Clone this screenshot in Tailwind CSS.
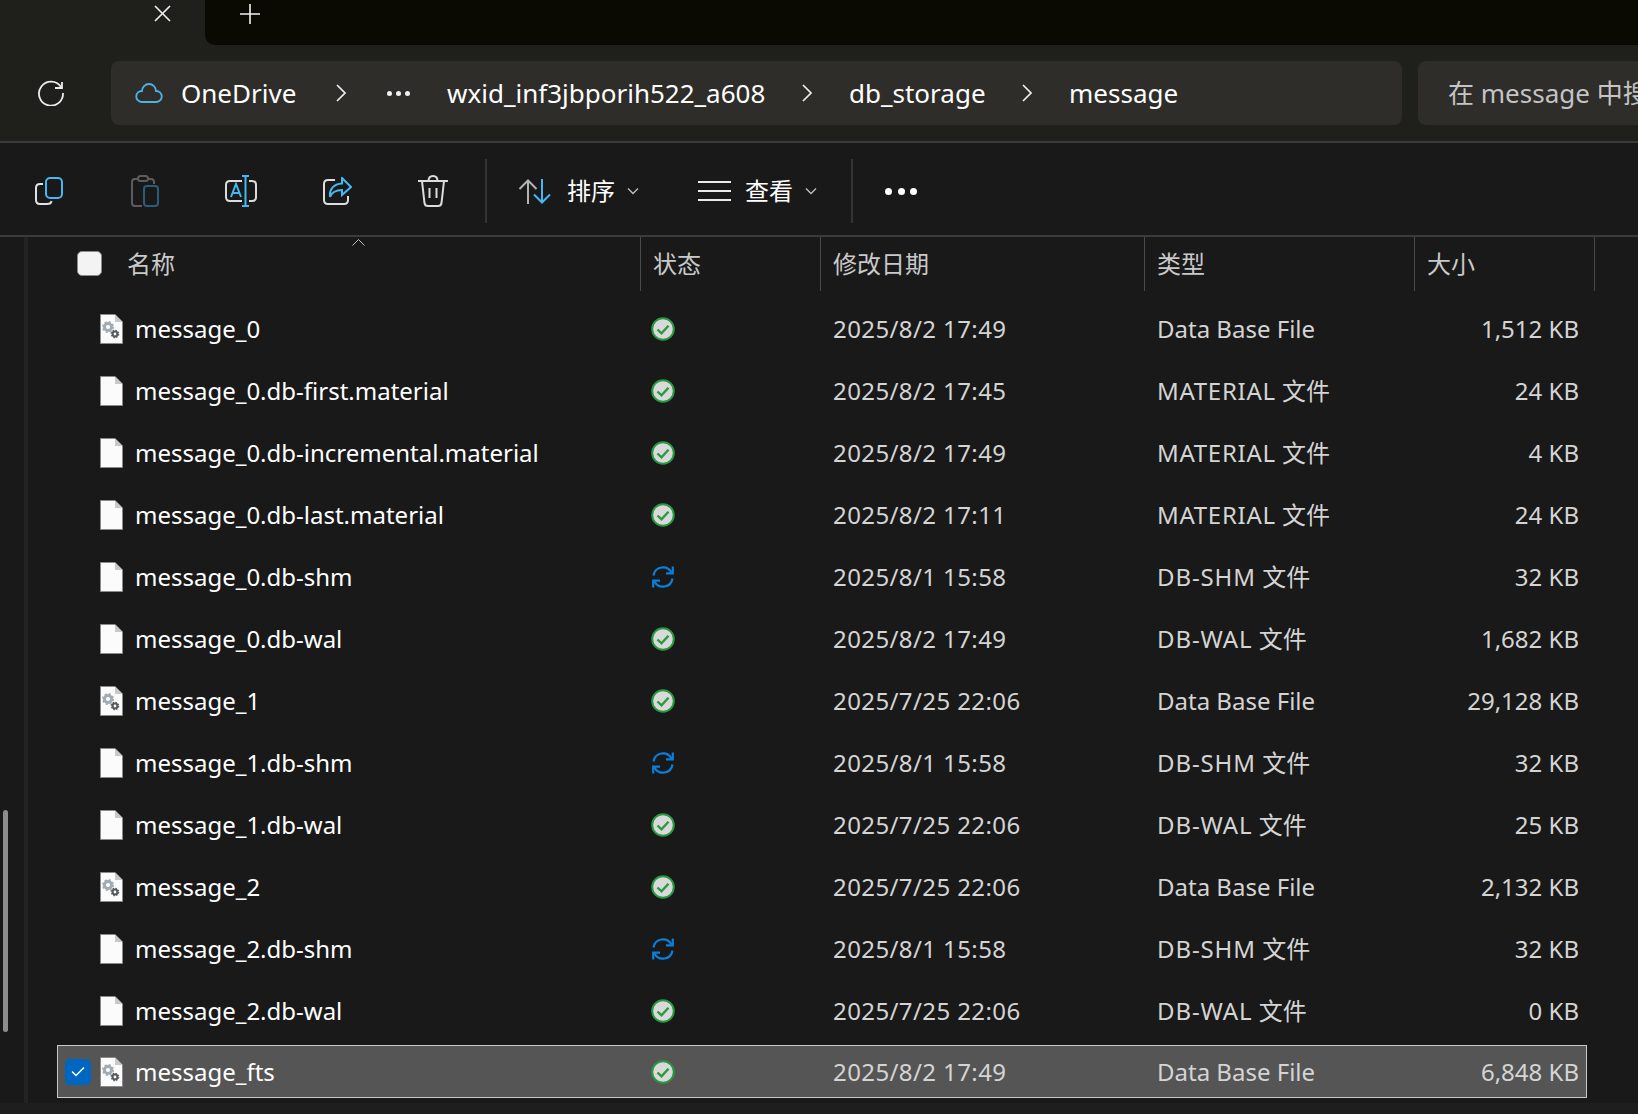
<!DOCTYPE html>
<html lang="zh-CN">
<head>
  <meta charset="UTF-8" />
  <title>message</title>
  <script src="https://cdn.jsdelivr.net/npm/@tailwindcss/browser@4"></script>
</head>
<body class="bg-[#191919] w-[1638px] h-[1114px] overflow-hidden font-['Noto_Sans','Noto_Sans_CJK_SC',sans-serif] text-[24px] text-white">

  <svg class="hidden">
    <symbol id="doc" viewBox="0 0 23 30">
      <path d="M.5.5H15L22.5 8V29.5H.5Z" fill="#fbfbfb" stroke="#8a8a8a"/>
      <path d="M15 .5V8H22.5Z" fill="#c8c8c8"/>
    </symbol>
    <symbol id="dbdoc" viewBox="0 0 23 30">
      <path d="M.5.5H15L22.5 8V29.5H.5Z" fill="#fbfbfb" stroke="#8a8a8a"/>
      <path d="M15 .5V8H22.5Z" fill="#c8c8c8"/>
      <circle cx="8" cy="13" r="3.6" fill="none" stroke="#a3abb2" stroke-width="3"/>
      <circle cx="8" cy="13" r="5.2" fill="none" stroke="#a3abb2" stroke-width="1.6" stroke-dasharray="2 2.1"/>
      <circle cx="15" cy="20" r="2.4" fill="none" stroke="#55595d" stroke-width="2"/>
      <circle cx="15" cy="20" r="3.7" fill="none" stroke="#55595d" stroke-width="1.2" stroke-dasharray="1.5 1.4"/>
    </symbol>
    <symbol id="ok" viewBox="0 0 24 24">
      <circle cx="12" cy="12" r="10.8" fill="#d9d9d9" stroke="#279a3f" stroke-width="2"/>
      <path d="M6.5 12.5l4 3.8 7-7.6" fill="none" stroke="#279a3f" stroke-width="2.4"/>
    </symbol>
    <symbol id="sync" viewBox="0 0 24 24">
      <g fill="none" stroke="#0a7fdc" stroke-width="2.2">
        <path d="M2.5 10.5A9.6 9.6 0 0 1 20.5 7.5"/>
        <path d="M21.8 1.5V8.4H15"/>
        <path d="M21.5 13.5A9.6 9.6 0 0 1 3.5 16.5"/>
        <path d="M2.2 22.5V15.6H9"/>
      </g>
    </symbol>
    <symbol id="chev" viewBox="0 0 12 20">
      <path d="M2 2l8 8-8 8" fill="none" stroke="#f0f0f0" stroke-width="1.7"/>
    </symbol>
    <symbol id="down" viewBox="0 0 12 8">
      <path d="M1 1.5l5 5 5-5" fill="none" stroke="#bdbdbd" stroke-width="1.4"/>
    </symbol>
  </svg>

  <!-- tab strip -->
  <div class="h-[45px] bg-[#1f1f1b] flex">
    <div class="w-[205px] flex justify-end items-center pr-[34px] pb-[19px]">
      <svg width="17" height="17" viewBox="0 0 17 17"><path d="M1 1l15 15M16 1L1 16" stroke="#f2f2f2" stroke-width="1.6"/></svg>
    </div>
    <div class="flex-1 bg-[#0b0a02] rounded-bl-[10px] flex items-center pl-[35px] pb-[17px]">
      <svg width="20" height="20" viewBox="0 0 20 20"><path d="M10 0v20M0 10h20" stroke="#f2f2f2" stroke-width="1.6"/></svg>
    </div>
  </div>

  <!-- address bar -->
  <div class="h-[98px] bg-[#1f1f1b] border-b-2 border-[#3b3b3b] flex items-center pl-[38px]">
    <svg class="w-[26px] h-[26px]" viewBox="0 0 26 26" fill="none" stroke="#ededed" stroke-width="1.8">
      <path d="M24 2V8H17"/>
      <path d="M23 7A12 12 0 1 0 25 13"/>
    </svg>
    <div class="ml-[47px] w-[1291px] h-[64px] bg-[#2e2d29] rounded-[8px] flex items-center text-[26px]">
      <svg class="ml-[24px] w-[28px] h-[20px]" viewBox="0 0 28 20"><path d="M6.500 19A5.500 5.500 0 0 1 7 8 7 7 0 0 1 21 8 5.500 5.500 0 0 1 21.500 19Z" fill="none" stroke="#4cb3e8" stroke-width="1.8"/></svg>
      <span class="ml-[18px] w-[115px] leading-none whitespace-nowrap">OneDrive</span>
      <svg class="ml-[39px] w-[12px] h-[20px]"><use href="#chev"/></svg>
      <span class="ml-[40px] w-[24px] flex gap-[4px]"><i class="w-[5px] h-[5px] rounded-full bg-[#f0f0f0]"></i><i class="w-[5px] h-[5px] rounded-full bg-[#f0f0f0]"></i><i class="w-[5px] h-[5px] rounded-full bg-[#f0f0f0]"></i></span>
      <span class="ml-[36px] w-[319px] leading-none whitespace-nowrap">wxid_inf3jbporih522_a608</span>
      <svg class="ml-[35px] w-[12px] h-[20px]"><use href="#chev"/></svg>
      <span class="ml-[36px] w-[135px] leading-none whitespace-nowrap">db_storage</span>
      <svg class="ml-[37px] w-[12px] h-[20px]"><use href="#chev"/></svg>
      <span class="ml-[36px] leading-none whitespace-nowrap">message</span>
    </div>
    <div class="ml-[16px] flex-1 h-[64px] bg-[#2e2d29] rounded-l-[8px] flex items-center pl-[30px] overflow-hidden">
      <span class="text-[#c4c4c4] text-[26px] whitespace-nowrap leading-none">在 message 中搜索</span>
    </div>
  </div>

  <!-- command bar -->
  <div class="h-[94px] border-b-2 border-[#3b3b3b] flex items-center pt-[4px]">
    <svg class="ml-[35px] w-[28px] h-[28px]" viewBox="0 0 28 28" fill="none" stroke-width="2">
      <path d="M8 7H5Q1 7 1 11V23Q1 27 5 27H12Q16 27 16.500 24" stroke="#e2e2e2"/>
      <rect x="11" y="1" width="16" height="20" rx="4" stroke="#45b7f2"/>
    </svg>
    <svg class="ml-[68px] w-[28px] h-[32px]" viewBox="0 0 28 32" fill="none" stroke-width="2">
      <path d="M7 4H4Q1 4 1 7V28Q1 31 4 31H11" stroke="#5d5d5d"/>
      <path d="M17 4H20Q23 4 23 7V9" stroke="#5d5d5d"/>
      <rect x="7" y="1" width="10" height="5" rx="2.500" stroke="#5d5d5d"/>
      <rect x="13" y="11" width="14" height="20" rx="3" stroke="#2c5c78"/>
    </svg>
    <svg class="ml-[66px] w-[32px] h-[32px]" viewBox="0 0 32 32" fill="none" stroke-width="2">
      <path d="M17 6H5Q1 6 1 10V22Q1 26 5 26H17" stroke="#dcdcdc"/>
      <path d="M24 6H27Q31 6 31 10V22Q31 26 27 26H24" stroke="#dcdcdc"/>
      <path d="M17 1H24M20.500 1V31M17 31H24" stroke="#45b7f2"/>
      <path d="M6 22L11 9L16 22M7.500 18H14.500" stroke="#45b7f2"/>
    </svg>
    <svg class="ml-[66px] w-[29px] h-[28px]" viewBox="0 0 29 28" fill="none" stroke-width="2">
      <path d="M12 3H5Q1 3 1 7V23Q1 27 5 27H21Q25 27 25 23V19" stroke="#dcdcdc"/>
      <path d="M19 1L28 10L19 18V13C13 13 9 15 7 20C6 12 11 7 19 6.500Z" stroke="#45b7f2"/>
    </svg>
    <svg class="ml-[66px] w-[30px] h-[32px]" viewBox="0 0 30 32" fill="none" stroke-width="2" stroke="#dcdcdc">
      <path d="M0 6H30M4 6L6.500 28Q7 31 10 31H20Q23 31 23.500 28L26 6M10.500 6Q10.500 1 15 1T19.500 6M11.500 13V23M18.500 13V23"/>
    </svg>
    <div class="ml-[37px] w-[2px] h-[64px] bg-[#333333]"></div>
    <svg class="ml-[31px] w-[34px] h-[25px]" viewBox="0 0 34 25" fill="none" stroke-width="2">
      <path d="M10 25V1.500M1.500 10L10 1.500L18.500 10" stroke="#b4b4b4"/>
      <path d="M24 0V23.500M16 15.500L24 23.500L32 15.500" stroke="#45b7f2"/>
    </svg>
    <span class="ml-[15px] w-[48px] leading-none whitespace-nowrap">排序</span>
    <svg class="ml-[12px] w-[12px] h-[8px]"><use href="#down"/></svg>
    <svg class="ml-[59px] w-[33px] h-[20px]" viewBox="0 0 33 20" stroke="#ececec" stroke-width="2"><path d="M0 1H33M0 10H33M0 19H33"/></svg>
    <span class="ml-[14px] w-[48px] leading-none whitespace-nowrap">查看</span>
    <svg class="ml-[12px] w-[12px] h-[8px]"><use href="#down"/></svg>
    <div class="ml-[34px] w-[2px] h-[64px] bg-[#333333]"></div>
    <span class="ml-[32px] w-[32px] flex justify-between"><i class="w-[7px] h-[7px] rounded-full bg-white"></i><i class="w-[7px] h-[7px] rounded-full bg-white"></i><i class="w-[7px] h-[7px] rounded-full bg-white"></i></span>
  </div>

  <!-- file pane -->
  <div class="flex h-[866px]">
    <div class="w-[24px] relative">
      <div class="absolute left-[3px] top-[573px] w-[5px] h-[222px] rounded-full bg-[#8d8d8d]"></div>
    </div>
    <div class="w-[4px] bg-[#232323]"></div>
    <div class="flex-1 relative">
      <!-- column header -->
      <div class="h-[54px] flex text-[#c9c9c9] relative">
        <svg class="absolute left-[324px] top-[1px] w-[13px] h-[8px]" viewBox="0 0 13 8"><path d="M.5 7.500l6-6 6 6" fill="none" stroke="#bdbdbd"/></svg>
        <div class="w-[613px] flex items-center border-r border-[#4a4a4a] pl-[49px] pb-[1px]">
          <span class="w-[25px] h-[25px] rounded-[5px] bg-[#f3f3f3] border border-[#8a8a8a]"></span>
          <span class="ml-[25px]">名称</span>
        </div>
        <div class="w-[180px] flex items-center border-r border-[#4a4a4a] pl-[12px] pb-[1px]">状态</div>
        <div class="w-[324px] flex items-center border-r border-[#4a4a4a] pl-[12px] pb-[1px]">修改日期</div>
        <div class="w-[270px] flex items-center border-r border-[#4a4a4a] pl-[12px] pb-[1px]">类型</div>
        <div class="w-[180px] flex items-center border-r border-[#4a4a4a] pl-[12px] pb-[1px]">大小</div>
      </div>

      <!-- rows -->
      <div class="pt-[7px] text-[#d4d4d4]">
        <div class="h-[62px] flex items-center"><svg class="ml-[72px] w-[23px] h-[30px]"><use href="#dbdoc"/></svg><span class="ml-[12px] w-[516px] text-white">message_0</span><svg class="w-[24px] h-[24px]"><use href="#ok"/></svg><span class="ml-[158px] w-[324px] tracking-[0.4px]">2025/8/2 17:49</span><span class="w-[241px]">Data Base File</span><span class="w-[181px] text-right">1,512 KB</span></div>
        <div class="h-[62px] flex items-center"><svg class="ml-[72px] w-[23px] h-[30px]"><use href="#doc"/></svg><span class="ml-[12px] w-[516px] text-white">message_0.db-first.material</span><svg class="w-[24px] h-[24px]"><use href="#ok"/></svg><span class="ml-[158px] w-[324px] tracking-[0.4px]">2025/8/2 17:45</span><span class="w-[241px]"><span class="tracking-[0.7px]">MATERIAL</span> 文件</span><span class="w-[181px] text-right">24 KB</span></div>
        <div class="h-[62px] flex items-center"><svg class="ml-[72px] w-[23px] h-[30px]"><use href="#doc"/></svg><span class="ml-[12px] w-[516px] text-white">message_0.db-incremental.material</span><svg class="w-[24px] h-[24px]"><use href="#ok"/></svg><span class="ml-[158px] w-[324px] tracking-[0.4px]">2025/8/2 17:49</span><span class="w-[241px]"><span class="tracking-[0.7px]">MATERIAL</span> 文件</span><span class="w-[181px] text-right">4 KB</span></div>
        <div class="h-[62px] flex items-center"><svg class="ml-[72px] w-[23px] h-[30px]"><use href="#doc"/></svg><span class="ml-[12px] w-[516px] text-white">message_0.db-last.material</span><svg class="w-[24px] h-[24px]"><use href="#ok"/></svg><span class="ml-[158px] w-[324px] tracking-[0.4px]">2025/8/2 17:11</span><span class="w-[241px]"><span class="tracking-[0.7px]">MATERIAL</span> 文件</span><span class="w-[181px] text-right">24 KB</span></div>
        <div class="h-[62px] flex items-center"><svg class="ml-[72px] w-[23px] h-[30px]"><use href="#doc"/></svg><span class="ml-[12px] w-[516px] text-white">message_0.db-shm</span><svg class="w-[24px] h-[24px]"><use href="#sync"/></svg><span class="ml-[158px] w-[324px] tracking-[0.4px]">2025/8/1 15:58</span><span class="w-[241px]"><span class="tracking-[0.9px]">DB-SHM</span> 文件</span><span class="w-[181px] text-right">32 KB</span></div>
        <div class="h-[62px] flex items-center"><svg class="ml-[72px] w-[23px] h-[30px]"><use href="#doc"/></svg><span class="ml-[12px] w-[516px] text-white">message_0.db-wal</span><svg class="w-[24px] h-[24px]"><use href="#ok"/></svg><span class="ml-[158px] w-[324px] tracking-[0.4px]">2025/8/2 17:49</span><span class="w-[241px]"><span class="tracking-[0.9px]">DB-WAL</span> 文件</span><span class="w-[181px] text-right">1,682 KB</span></div>
        <div class="h-[62px] flex items-center"><svg class="ml-[72px] w-[23px] h-[30px]"><use href="#dbdoc"/></svg><span class="ml-[12px] w-[516px] text-white">message_1</span><svg class="w-[24px] h-[24px]"><use href="#ok"/></svg><span class="ml-[158px] w-[324px] tracking-[0.4px]">2025/7/25 22:06</span><span class="w-[241px]">Data Base File</span><span class="w-[181px] text-right">29,128 KB</span></div>
        <div class="h-[62px] flex items-center"><svg class="ml-[72px] w-[23px] h-[30px]"><use href="#doc"/></svg><span class="ml-[12px] w-[516px] text-white">message_1.db-shm</span><svg class="w-[24px] h-[24px]"><use href="#sync"/></svg><span class="ml-[158px] w-[324px] tracking-[0.4px]">2025/8/1 15:58</span><span class="w-[241px]"><span class="tracking-[0.9px]">DB-SHM</span> 文件</span><span class="w-[181px] text-right">32 KB</span></div>
        <div class="h-[62px] flex items-center"><svg class="ml-[72px] w-[23px] h-[30px]"><use href="#doc"/></svg><span class="ml-[12px] w-[516px] text-white">message_1.db-wal</span><svg class="w-[24px] h-[24px]"><use href="#ok"/></svg><span class="ml-[158px] w-[324px] tracking-[0.4px]">2025/7/25 22:06</span><span class="w-[241px]"><span class="tracking-[0.9px]">DB-WAL</span> 文件</span><span class="w-[181px] text-right">25 KB</span></div>
        <div class="h-[62px] flex items-center"><svg class="ml-[72px] w-[23px] h-[30px]"><use href="#dbdoc"/></svg><span class="ml-[12px] w-[516px] text-white">message_2</span><svg class="w-[24px] h-[24px]"><use href="#ok"/></svg><span class="ml-[158px] w-[324px] tracking-[0.4px]">2025/7/25 22:06</span><span class="w-[241px]">Data Base File</span><span class="w-[181px] text-right">2,132 KB</span></div>
        <div class="h-[62px] flex items-center"><svg class="ml-[72px] w-[23px] h-[30px]"><use href="#doc"/></svg><span class="ml-[12px] w-[516px] text-white">message_2.db-shm</span><svg class="w-[24px] h-[24px]"><use href="#sync"/></svg><span class="ml-[158px] w-[324px] tracking-[0.4px]">2025/8/1 15:58</span><span class="w-[241px]"><span class="tracking-[0.9px]">DB-SHM</span> 文件</span><span class="w-[181px] text-right">32 KB</span></div>
        <div class="h-[62px] flex items-center"><svg class="ml-[72px] w-[23px] h-[30px]"><use href="#doc"/></svg><span class="ml-[12px] w-[516px] text-white">message_2.db-wal</span><svg class="w-[24px] h-[24px]"><use href="#ok"/></svg><span class="ml-[158px] w-[324px] tracking-[0.4px]">2025/7/25 22:06</span><span class="w-[241px]"><span class="tracking-[0.9px]">DB-WAL</span> 文件</span><span class="w-[181px] text-right">0 KB</span></div>
        <div class="mt-[3px] ml-[29px] w-[1530px] h-[53px] flex items-center bg-[#555555] border border-[#c8c8c8]">
          <span class="ml-[7px] w-[26px] h-[26px] rounded-[5px] bg-[#0067c0] flex items-center justify-center">
            <svg width="14" height="11" viewBox="0 0 14 11"><path d="M1 5.500l4 4 8-8" fill="none" stroke="#fff" stroke-width="1.500"/></svg>
          </span>
          <svg class="ml-[9px] w-[23px] h-[30px]"><use href="#dbdoc"/></svg><span class="ml-[12px] w-[516px] text-white">message_fts</span><svg class="w-[24px] h-[24px]"><use href="#ok"/></svg><span class="ml-[158px] w-[324px] tracking-[0.4px]">2025/8/2 17:49</span><span class="w-[241px]">Data Base File</span><span class="w-[181px] text-right">6,848 KB</span>
        </div>
      </div>
    </div>
  </div>

  <!-- status strip -->
  <div class="h-[11px] bg-[#1e1e1e]"></div>

</body>
</html>
